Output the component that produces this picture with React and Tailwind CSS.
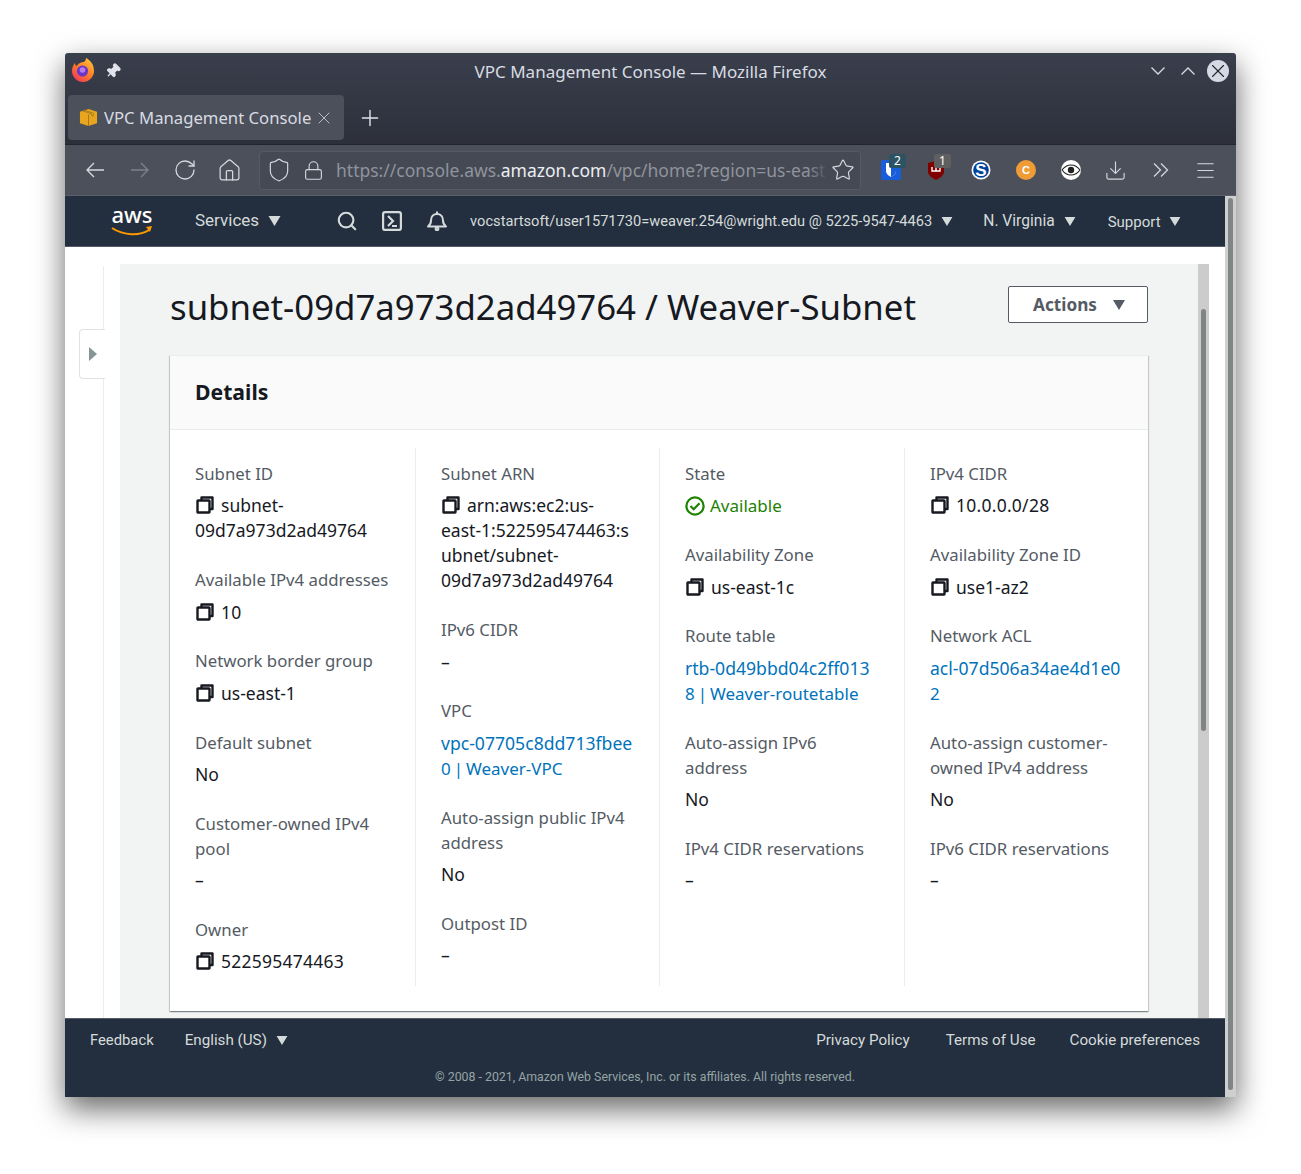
import { Search, House, RotateCw, Shield, Lock, Star, Download, Menu, Plus, X, Pin } from 'lucide-react';

const Caret = ({ className = '' }) => (
  <svg viewBox="0 0 12 10" className={className} fill="currentColor"><path d="M0 0h12L6 10z" /></svg>
);

const CopyIcon = () => (
  <svg viewBox="0 0 18 18" className="w-[18px] h-[18px] inline-block align-[-2px] ml-[1px] mr-[7px]" fill="none" stroke="#16191f" strokeWidth="2.4" strokeLinejoin="round">
    <path d="M5.5 4V1.5h11V13H14" />
    <rect x="1.5" y="4.5" width="12" height="12" rx="0.5" />
  </svg>
);

const Field = ({ label, children }) => (
  <div className="mb-[23.95px]">
    <div className="text-[#545b64] mb-[7.3px] text-[16.8px]">{label}</div>
    <div className="text-[#16191f] whitespace-nowrap">{children}</div>
  </div>
);

const Copy = ({ children }) => <><CopyIcon />{children}</>;
const Digits = ({ children }) => <span className="tracking-[0.25px]">{children}</span>;

// links wrap mid-word in the console, so the two lines are given apart
const Link = ({ first, second }) => (
  <span className="text-[#0073bb]">
    <span className="text-[17.6px]">{first}</span><br />
    <span className="text-[17px] [word-spacing:-1.5px]">{second}</span>
  </span>
);

const columns = [
  [
    ['Subnet ID', <Copy>subnet-<br />09d7a973d2ad49764</Copy>],
    ['Available IPv4 addresses', <Copy><Digits>10</Digits></Copy>],
    ['Network border group', <Copy>us-east-1</Copy>],
    ['Default subnet', 'No'],
    [<>Customer-owned IPv4<br />pool</>, '–'],
    ['Owner', <Copy><Digits>522595474463</Digits></Copy>],
  ],
  [
    ['Subnet ARN', <Copy>arn:aws:ec2:us-<br />east-1:522595474463:s<br />ubnet/subnet-<br />09d7a973d2ad49764</Copy>],
    ['IPv6 CIDR', '–'],
    ['VPC', <Link first="vpc-07705c8dd713fbee" second="0 | Weaver-VPC" />],
    [<>Auto-assign public IPv4<br />address</>, 'No'],
    ['Outpost ID', '–'],
  ],
  [
    ['State', (
      <span className="text-[#1d8102] text-[17px]">
        <svg viewBox="0 0 20 20" className="w-[20px] h-[20px] inline-block align-[-4px] mr-[5px]" fill="none" stroke="#1d8102" strokeWidth="2.2">
          <circle cx="10" cy="10" r="8.6" /><path d="M5.5 10l3.2 3.2 5.8-6" />
        </svg>
        Available
      </span>
    )],
    ['Availability Zone', <Copy>us-east-1c</Copy>],
    ['Route table', <Link first="rtb-0d49bbd04c2ff013" second="8 | Weaver-routetable" />],
    [<>Auto-assign IPv6<br />address</>, 'No'],
    ['IPv4 CIDR reservations', '–'],
  ],
  [
    ['IPv4 CIDR', <Copy><Digits>10.0.0.0/28</Digits></Copy>],
    ['Availability Zone ID', <Copy>use1-az2</Copy>],
    ['Network ACL', <Link first="acl-07d506a34ae4d1e0" second="2" />],
    [<>Auto-assign customer-<br />owned IPv4 address</>, 'No'],
    ['IPv6 CIDR reservations', '–'],
  ],
];

const Extension = ({ children, badge, badgeClass, className = '' }) => (
  <div className={`relative w-[20px] h-[20px] ${className}`}>
    {children}
    {badge && <span className={`absolute left-[8px] top-[-6px] w-[17px] h-[14px] rounded-[2px] text-white text-[12px] leading-[14px] text-center ${badgeClass}`}>{badge}</span>}
  </div>
);

export default function App() {
  return (
    <div className="w-[1301px] h-[1174px] bg-white pt-[53px] pl-[65px] overflow-hidden" style={{ fontFamily: '"Noto Sans", sans-serif' }}>
      <div className="w-[1171px] h-[1044px] flex flex-col rounded-t-[3px] shadow-[0_12px_30px_rgba(0,0,0,0.6)]">
        {/* title bar + tabs */}
        <div className="h-[92px] shrink-0 rounded-t-[3px] bg-gradient-to-b from-[#3a3f4d] to-[#2d303b] border-b border-[#23252c] flex flex-col">
          <div className="h-[38px] relative flex items-center px-[6px]">
            <svg viewBox="0 0 24 24" className="w-[24px] h-[24px] -mt-[4px]">
              <defs>
                <linearGradient id="fx" x1="0.9" y1="0" x2="0.2" y2="1">
                  <stop offset="0" stopColor="#ffc93a" />
                  <stop offset="0.55" stopColor="#ff7a26" />
                  <stop offset="1" stopColor="#f0355f" />
                </linearGradient>
              </defs>
              <path d="M15 0c4 2 8 6 8 13 0 6-5 11-11 11S1 19 1 13c0-3 1-6 3-8 0 2 1 3 2 3 1-3 5-4 7-4 1-1 2-2 2-4z" fill="url(#fx)" />
              <circle cx="11.5" cy="13" r="5.6" fill="#6a35c9" />
              <circle cx="11.5" cy="12" r="2.8" fill="#b77be8" />
            </svg>
            <Pin className="w-[16px] h-[16px] ml-[10px] -mt-[2px] rotate-45 text-[#e1e4ea]" fill="currentColor" />
            <div className="absolute left-0 right-0 top-0 h-[38px] flex items-center justify-center text-[#d8dbe2] text-[17px]">VPC Management Console — Mozilla Firefox</div>
            <div className="ml-auto flex items-center text-[#d8dbe2] relative -mt-[2px] pr-[1px]">
              <svg viewBox="0 0 14 8" className="w-[14px] h-[8px] mr-[16px]" fill="none" stroke="currentColor" strokeWidth="1.3"><path d="M0.5 0.5L7 7l6.5-6.5" /></svg>
              <svg viewBox="0 0 14 8" className="w-[14px] h-[8px] mr-[12px]" fill="none" stroke="currentColor" strokeWidth="1.3"><path d="M0.5 7.5L7 1l6.5 6.5" /></svg>
              <div className="w-[22px] h-[22px] rounded-full bg-[#d5d9e4] flex items-center justify-center">
                <X className="w-[22px] h-[22px] text-[#23252c]" strokeWidth={1.2} />
              </div>
            </div>
          </div>
          <div className="flex items-start pl-[3px]">
            <div className="w-[276px] h-[45px] mt-[4px] rounded-[4px] bg-[#4c505b] flex items-center pl-[11px] text-[#d8dbe2] text-[16.7px]">
              <svg viewBox="0 0 20 20" className="w-[19px] h-[19px] mr-[6px]">
                <path d="M1 4l9-3 9 3v12l-9 3-9-3z" fill="#e8a51d" />
                <path d="M6 2.5l9 3v3l-2-1V6l-9-3zM10 7v12" stroke="#8d6a17" strokeWidth="0.8" fill="#f2c04a" />
              </svg>
              VPC Management Console
              <X className="w-[20px] h-[20px] ml-[3px] text-[#c3c6cf]" strokeWidth={1.1} />
            </div>
            <Plus className="w-[26px] h-[26px] ml-[13px] mt-[14px] text-[#e1e4ea]" strokeWidth={1.3} />
          </div>
        </div>
        {/* toolbar */}
        <div className="h-[51px] shrink-0 bg-[#4c505b] border-b border-[#5c606b] flex items-center text-[#d4d7de] pl-[21px]">
          <svg viewBox="0 0 18 16" className="w-[18px] h-[16px]" fill="none" stroke="currentColor" strokeWidth="1.4"><path d="M18 8H1M8 1L1 8l7 7" /></svg>
          <svg viewBox="0 0 18 16" className="w-[18px] h-[16px] ml-[27px] text-[#7d818b]" fill="none" stroke="currentColor" strokeWidth="1.4"><path d="M0 8h17M10 1l7 7-7 7" /></svg>
          <RotateCw className="w-[24px] h-[24px] ml-[24px]" strokeWidth={1.3} />
          <House className="w-[25px] h-[25px] ml-[20px]" strokeWidth={1.2} />
          <div className="w-[602px] h-[39px] ml-[17px] rounded-[4px] bg-[#454954] border border-[#565a65] flex items-center pl-[6px] overflow-hidden relative">
            <Shield className="w-[26px] h-[26px] shrink-0" strokeWidth={1.1} />
            <Lock className="w-[21px] h-[21px] ml-[11px] shrink-0" strokeWidth={1.3} />
            <span className="ml-[12px] text-[17.5px] whitespace-nowrap text-[#8f939c]">https://console.aws.<span className="text-[#eceef2]">amazon.com</span>/vpc/home?region=us-east</span>
            <div className="absolute right-0 top-0 bottom-0 w-[52px] bg-gradient-to-r from-transparent to-[#454954] to-40%" />
            <Star className="absolute right-[5px] w-[24px] h-[24px]" strokeWidth={1.2} />
          </div>
          <Extension className="ml-[20px]" badge="2" badgeClass="bg-[#2c5363]">
            <svg viewBox="0 0 20 20" className="w-[20px] h-[20px]"><rect width="20" height="20" rx="2" fill="#175ddc" /><path d="M5 3h10v8c0 3-3 5-5 6-2-1-5-3-5-6z" fill="#fff" /><path d="M10 3h5v8c0 3-3 5-5 6z" fill="#175ddc" /></svg>
          </Extension>
          <Extension className="ml-[25px]" badge="1" badgeClass="bg-[#5f5f5f]">
            <svg viewBox="0 0 20 20" className="w-[20px] h-[20px]"><path d="M2 3l8-2 8 2v9c0 3-4 6-8 8-4-2-8-5-8-8z" fill="#800000" /><path d="M6 7v4h8V7M10 7v4" stroke="#fff" strokeWidth="1.4" fill="none" /></svg>
          </Extension>
          <Extension className="ml-[25px]">
            <svg viewBox="0 0 20 20" className="w-[20px] h-[20px]"><circle cx="10" cy="10" r="9.5" fill="#fff" /><circle cx="10" cy="10" r="7.8" fill="#00429a" /><text x="10" y="16" textAnchor="middle" fontSize="17" fontWeight="700" fill="#fff" fontFamily="Liberation Sans">S</text></svg>
          </Extension>
          <Extension className="ml-[25px]">
            <svg viewBox="0 0 20 20" className="w-[20px] h-[20px]"><circle cx="10" cy="10" r="10" fill="#ef9b36" /><text x="10" y="14" textAnchor="middle" fontSize="11" fontWeight="700" fill="#fff" fontFamily="Liberation Sans">C</text></svg>
          </Extension>
          <Extension className="ml-[25px]">
            <svg viewBox="0 0 20 20" className="w-[20px] h-[20px]"><circle cx="10" cy="10" r="10" fill="#fff" /><path d="M1 10c3-4 6-5 9-5s6 1 9 5c-3 4-6 5-9 5s-6-1-9-5z" fill="none" stroke="#222" strokeWidth="1.2" /><circle cx="10" cy="10" r="3.2" fill="#222" /></svg>
          </Extension>
          <Download className="w-[23px] h-[23px] ml-[23px]" strokeWidth={1.2} />
          <svg viewBox="0 0 16 14" className="w-[16px] h-[14px] ml-[26px]" fill="none" stroke="currentColor" strokeWidth="1.3"><path d="M1 0.5L7.5 7 1 13.5M8 0.5L14.5 7 8 13.5" /></svg>
          <Menu className="w-[23px] h-[23px] ml-[25px]" strokeWidth={1.2} />
        </div>
        {/* page + window scrollbar */}
        <div className="flex-1 flex min-h-0">
          <div className="w-[1160px] flex flex-col min-w-0">
            {/* aws nav */}
            <div className="h-[51px] shrink-0 bg-[#232f3e] border-b border-[#545b64] flex items-center text-[#d5dbdb]" style={{ fontFamily: 'Roboto, sans-serif' }}>
              <div className="ml-[46px] w-[42px] h-[34px] flex flex-col items-center">
                <span className="text-white text-[22px] leading-[24px] font-medium -mt-[2px]" style={{ fontFamily: '"Noto Sans", sans-serif' }}>aws</span>
                <svg viewBox="0 0 42 10" className="w-[42px] h-[10px]">
                  <path d="M1 2c12 8 28 8 37 2" fill="none" stroke="#ff9900" strokeWidth="2" />
                  <path d="M35 1l6-1-2 6z" fill="#ff9900" />
                </svg>
              </div>
              <span className="ml-[42px] text-[17px]">Services</span>
              <Caret className="w-[13px] h-[10px] ml-[9px]" />
              <Search className="w-[22px] h-[22px] ml-[55px]" strokeWidth={2.3} />
              <svg viewBox="0 0 20 20" className="w-[20px] h-[20px] ml-[24px]" fill="none" stroke="currentColor" strokeWidth="2.2"><rect x="1.1" y="1.1" width="17.8" height="17.8" rx="2" /><path d="M6 5l5 5-5 5M10 15h5" /></svg>
              <svg viewBox="0 0 20 20" className="w-[20px] h-[20px] ml-[25px]" fill="none" stroke="currentColor" strokeWidth="2"><path d="M1 15.5c2-1.5 3-3 3-6 0-4 2.5-6.5 6-6.5s6 2.5 6 6.5c0 3 1 4.5 3 6zM10 0.5V3" strokeLinejoin="round" /><circle cx="10" cy="17.8" r="1.4" /></svg>
              <span className="ml-[23px] mt-[2px] text-[14.65px] whitespace-nowrap">vocstartsoft/user1571730=weaver.254@wright.edu @ 5225-9547-4463</span>
              <Caret className="w-[12px] h-[9px] ml-[9px]" />
              <span className="ml-[30px] mt-[2px] text-[15.6px] whitespace-nowrap">N. Virginia</span>
              <Caret className="w-[12px] h-[9px] ml-[9px]" />
              <span className="ml-[32px] mt-[2px] text-[15px]">Support</span>
              <Caret className="w-[12px] h-[9px] ml-[8px]" />
            </div>
            {/* content */}
            <div className="flex-1 min-h-0 bg-white relative flex pt-[17px] text-[17.5px] leading-[25px]">
              <div className="w-[39px] border-r border-[#eaeded] shrink-0 mt-[2px]" />
              <div className="absolute left-[14px] top-[82px] w-[26px] h-[50px] bg-white border border-r-0 border-[#dfe3e3] rounded-l-[4px] flex items-center pl-[9px]">
                <svg viewBox="0 0 8 14" className="w-[8px] h-[14px]" fill="#879596"><path d="M0 0l8 7-8 7z" /></svg>
              </div>
              <div className="ml-[16px] w-[1078px] bg-[#f2f3f3] px-[50px] overflow-hidden">
                <div className="flex items-start justify-between mt-[22px] pr-[1px]">
                  <h1 className="text-[34.75px] leading-[44px] -mt-[1px] text-[#16191f] whitespace-nowrap">subnet-09d7a973d2ad49764 / Weaver-Subnet</h1>
                  <button className="w-[140px] h-[37px] border border-[#545b64] rounded-[2px] bg-white text-[#545b64] font-bold flex items-center justify-center pl-[3px] text-[17.2px] mr-[-1px]">
                    Actions
                    <Caret className="w-[14px] h-[10px] ml-[15px]" />
                  </button>
                </div>
                <div className="mt-[26px] w-[978px] bg-white border-t border-[#eaeded] shadow-[0_1px_1px_0_rgba(0,28,36,0.3),1px_1px_1px_0_rgba(0,28,36,0.15),-1px_1px_1px_0_rgba(0,28,36,0.15)]">
                  <div className="h-[74px] bg-[#fafafa] border-b border-[#eaeded] flex items-center px-[25px] pb-[2px]">
                    <h2 className="text-[21.2px] font-bold text-[#16191f]">Details</h2>
                  </div>
                  <div className="grid grid-cols-[246px_244px_245px_243px] py-[18px] h-[581px]">
                    {columns.map((col, i) => (
                      <div key={i} className={`pl-[25px] pt-[13px] h-[538px] ${i < 3 ? 'border-r border-[#eaeded]' : ''}`}>
                        {col.map(([label, value], j) => <Field key={j} label={label}>{value}</Field>)}
                      </div>
                    ))}
                  </div>
                </div>
              </div>
              {/* inner scrollbar */}
              <div className="w-[11px] bg-[#cccccc] flex justify-center shrink-0 pt-[45px]">
                <div className="w-[5px] h-[422px] rounded-full bg-[#7f8585]" />
              </div>
            </div>
            {/* footer */}
            <div className="h-[79px] shrink-0 bg-[#232f3e] border-t border-[#545b64] text-[#d5dbdb] px-[25px]" style={{ fontFamily: 'Roboto, sans-serif' }}>
              <div className="flex items-center h-[42px] pt-[1px] text-[15.2px]">
                <span className="text-[14.8px]">Feedback</span>
                <span className="ml-[31px]">English (US)</span>
                <Caret className="w-[12px] h-[9px] ml-[9px]" />
                <span className="ml-auto">Privacy Policy</span>
                <span className="ml-[36px]">Terms of Use</span>
                <span className="ml-[34px]">Cookie preferences</span>
              </div>
              <div className="text-center text-[12.35px] text-[#95a5a6] mt-[7px]">© 2008 - 2021, Amazon Web Services, Inc. or its affiliates. All rights reserved.</div>
            </div>
          </div>
          {/* window scrollbar */}
          <div className="w-[11px] bg-[#cfcfcf] flex justify-center pt-[2px]">
            <div className="w-[5px] h-[892px] rounded-full bg-[#808585]" />
          </div>
        </div>
      </div>
    </div>
  );
}
